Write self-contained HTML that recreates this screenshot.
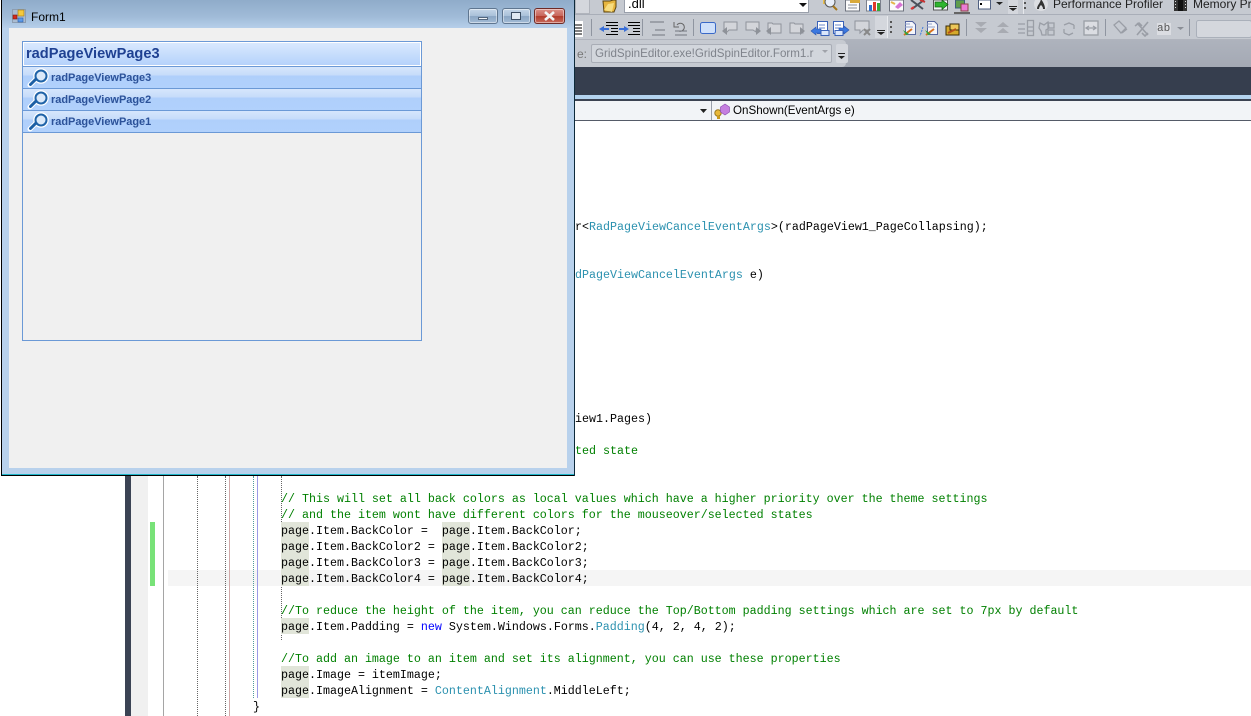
<!DOCTYPE html>
<html><head><meta charset="utf-8"><style>
html,body{margin:0;padding:0;background:#fff}
#p{position:relative;width:1251px;height:716px;overflow:hidden;background:#fff;font-family:"Liberation Sans",sans-serif}
.a{position:absolute}
.c{position:absolute;left:281px;height:16px;font:11.67px/16px "Liberation Mono",monospace;white-space:pre;color:#000;margin-top:1px}
.g{color:#008000}.t{color:#2b91af}.k{color:#0000ff}
.h{position:absolute;width:28px;height:16px;background:#e1e5d9}
.it{position:absolute;left:23px;width:398px;height:21px;background:linear-gradient(#d6e6fc 0,#c6dcfa 8px,#afcffb 9px,#b1d1fc 100%);border-bottom:1px solid #6b99d6}
.it span{position:absolute;left:28px;top:4px;font:bold 11px/15px "Liberation Sans",sans-serif;color:#2c5299;letter-spacing:-.03px}
.it svg{position:absolute;left:4px;top:0}
.b{position:absolute;top:8px;height:14px;border:1px solid #5f7690;border-radius:3px;background:linear-gradient(#c5d6e8,#a9c0d9 50%,#8ba6c4 52%,#a3bcd6);box-shadow:inset 0 0 0 1px rgba(255,255,255,.45)}
</style></head><body><div id="p">

<!-- toolbars -->
<div class="a" style="left:575px;top:0;width:676px;height:40px;background:#c6cad1"></div>
<div class="a" style="left:575px;top:14px;width:676px;height:1px;background:#a9aeb8"></div>
<div class="a" style="left:575px;top:39px;width:676px;height:1px;background:#b0b4bd"></div>
<div class="a" style="left:575px;top:40px;width:676px;height:27px;background:linear-gradient(#aeb3bd,#a4a9b4)"></div>
<div class="a" style="left:575px;top:40px;width:271px;height:27px;background:#c6cad1;border-radius:0 4px 4px 0"></div>
<div class="a" style="left:575px;top:67px;width:676px;height:28px;background:#363e4e"></div>
<div class="a" style="left:575px;top:95px;width:676px;height:4px;background:#b4d3ef"></div>
<div class="a" style="left:575px;top:99px;width:676px;height:2px;background:#3c4352"></div>
<div class="a" style="left:575px;top:101px;width:676px;height:19px;background:#f2f4f7"></div>
<div class="a" style="left:575px;top:120px;width:676px;height:1px;background:#555b68"></div>
<div class="a" style="left:711px;top:101px;width:1px;height:19px;background:#9aa0ab"></div>

<!-- first row items -->
<div class="a" style="left:575px;top:0;width:13px;height:13px;background:#d4d7dd;border:1px solid #b0b4bc;border-top:0"></div>
<div class="a" style="left:624px;top:0;width:180px;height:12px;background:#fff;border:1px solid #9aa0ab;border-top:0;font:13px/8px 'Liberation Sans',sans-serif;color:#000;padding-left:3px;overflow:hidden">.dll</div>
<div class="a" style="left:1053px;top:-3px;font:12px/14px 'Liberation Sans',sans-serif;color:#222;white-space:pre">Performance Profiler</div>
<div class="a" style="left:1193px;top:-3px;font:12px/14px 'Liberation Sans',sans-serif;color:#222;white-space:pre">Memory Pr</div>

<!-- third row combo -->
<div class="a" style="left:577px;top:46px;font:12px/16px 'Liberation Sans',sans-serif;color:#777">e:</div>
<div class="a" style="left:591px;top:44px;width:236px;height:17px;background:#d2d6dc;border:1px solid #a9adb6;border-radius:2px;font:11.6px/17px 'Liberation Sans',sans-serif;color:#7f838b;white-space:pre;overflow:hidden;padding-left:3px"><span>GridSpinEditor.exe!GridSpinEditor.Form1.r</span></div>
<div class="a" style="left:836px;top:44px;width:12px;height:19px;background:#d4d7dd;border-radius:2px"></div>

<!-- second combobox row text -->
<div class="a" style="left:733px;top:103px;font:11.6px/16px 'Liberation Sans',sans-serif;color:#000;white-space:pre">OnShown(EventArgs e)</div>

<!-- toolbar icons -->
<svg class="a" style="left:0;top:0" width="1251" height="125" viewBox="0 0 1251 125">
<!-- member icon -->
<g transform="translate(714,103)">
<circle cx="4" cy="10" r="3.200" fill="#e8b83a" stroke="#9a7a20"/><rect x="3" y="13" width="3" height="3" fill="#c99a1e"/>
<path d="M11 1l4.500 3v5l-4.500 3-4.500-3V4z" fill="#c57fe0" stroke="#8d4fb0" stroke-width=".7"/>
</g>
<path d="M700 109h7l-3.500 4z" fill="#222"/>
<path d="M799 3h8l-4 4z" fill="#111"/>
<!-- folder -->
<path d="M603 1h7l3-1h3v7l-2 5h-10z" fill="#e6b53f" stroke="#5c4510"/>
<path d="M604 10l4-6 6-1-2 9z" fill="#f7dd80"/>
<!-- row1 icons -->
<rect x="823" y="0" width="7" height="4" fill="#e9bf4c"/><circle cx="830" cy="2" r="5" fill="#e8eef8" stroke="#555"/><path d="M833 6l4 4" stroke="#a5761a" stroke-width="2"/>
<rect x="845.500" y="0" width="14" height="11" fill="#fbfbfb" stroke="#6f7480"/><path d="M848 5h9M848 8h9" stroke="#8a8f9a"/><path d="M850 0h10v3h-10z" fill="#d8a93a"/>
<rect x="866.500" y="0" width="14" height="11" fill="#fff" stroke="#7b808c"/><rect x="869" y="5" width="3" height="6" fill="#2f70d0"/><rect x="873" y="2" width="3" height="9" fill="#e03b2b"/><rect x="877" y="3" width="3" height="8" fill="#38a838"/>
<rect x="889.500" y="0" width="14" height="11" fill="#fbfbfb" stroke="#6f7480"/><path d="M895 7l5-5 3 3-5 4z" fill="#d775d3"/><path d="M891 2l4 2" stroke="#e3b64a" stroke-width="2"/>
<path d="M911 0l12 9M924 0l-12 9" stroke="#4b505a" stroke-width="2"/><path d="M911 9l3-2" stroke="#d33" stroke-width="2"/><path d="M920 0l5 2" stroke="#c33" stroke-width="2"/>
<rect x="933.500" y="0" width="14" height="10" fill="#f4f6f9" stroke="#555"/><path d="M935 2h7V0l6 4.500-6 5V7h-7z" fill="#2fb52f" stroke="#136013" stroke-width=".7"/>
<rect x="955.500" y="0" width="9" height="8" fill="#5f9d4c" stroke="#3e5c80"/><rect x="961" y="4" width="7" height="7" fill="#ec7bd6" stroke="#844"/><rect x="954" y="12" width="16" height="2" fill="#666"/>
<rect x="978.500" y="0" width="12" height="9" fill="#fff" stroke="#4f5f80"/><rect x="980" y="3" width="2" height="2" fill="#000"/>
<path d="M996 2h7l-3.500 3z" fill="#222"/>
<rect x="1008" y="0" width="10" height="14" fill="#d4d7dd"/>
<path d="M1009 6h8v1h-8zM1009 8h8l-4 3z" fill="#222"/>
<path d="M1023.500 0v14" stroke="#e6e8ec"/><path d="M1024 2h2v2h-2zM1024 7h2v2h-2z" fill="#555"/>
<circle cx="1041" cy="4" r="7" fill="#dcdee2"/><path d="M1037 9c0-4 3-5 4-10 2 3 4 6 4 10h-2c0-2-1-3-2-4-1 1-2 2-2 4z" fill="#333"/>
<rect x="1174" y="0" width="13" height="11" fill="#333"/><path d="M1175 1h1v1h-1zM1175 4h1v1h-1zM1175 7h1v1h-1zM1185 1h1v1h-1zM1185 4h1v1h-1zM1185 7h1v1h-1z" fill="#ddd"/><rect x="1178" y="0" width="5" height="11" fill="#111"/>

<!-- row2 -->
<rect x="575" y="21" width="8" height="16" fill="#fff"/><path d="M575 25h7M575 28h7M575 31h7M575 34h7" stroke="#000"/>
<path d="M591.500 19v17M642.500 19v17M693.500 19v17M966.500 19v17M1105.500 19v17M1189.500 19v17" stroke="#8f95a0"/>
<path d="M606 22.500h12M606 25.500h12M611 28.500h7M611 31.500h7M606 34.500h12M628 22.500h12M628 25.500h12M633 28.500h7M633 31.500h7M628 34.500h12" stroke="#000"/>
<path d="M599 29l5-3v2h5v2h-5v2zM629 29l-5-3v2h-5v2h5v2z" fill="#3a6fd8"/>
<path d="M650 22h14M655 30h10M652 35h13" stroke="#73777f"/>
<path d="M677 25a4 4 0 1 1 2 6" fill="none" stroke="#666"/><path d="M674 22v5h5" fill="none" stroke="#666"/><path d="M675 31h12M675 35h12" stroke="#73777f"/>
<rect x="700.500" y="22.500" width="15" height="11" rx="2" fill="#cfe0fa" stroke="#3a69c8"/>
<g fill="#d3d5da" stroke="#8f939b">
<path d="M724 22h13v8h-8l-2 2h-3z"/><path d="M746 22h13v8h-3v2l-3-2h-7z"/>
<path d="M768 23h4l1 1h8v9h-13z"/><path d="M790 23h4l1 1h8v9h-13z"/>
</g>
<g fill="#8e9299"><path d="M722 31l5-4v8zM761 31l-5-4v8zM766 31l5-4v8zM805 31l-5-4v8z"/></g>
<rect x="817.500" y="21.500" width="10" height="12" fill="#fff" stroke="#3a62b8"/><path d="M819 25h6M819 28h6" stroke="#6a8acc"/><path d="M811 31l5-4v2h5v4h-5v2z" fill="#3b78e0" stroke="#2a56b0" stroke-width=".6"/><rect x="821" y="30.500" width="8" height="5" fill="#dbe7fb" stroke="#3a62b8"/>
<rect x="833.500" y="21.500" width="10" height="12" fill="#fff" stroke="#3a62b8"/><path d="M835 25h6M835 28h6" stroke="#6a8acc"/><path d="M849 30l-5-4v2h-5v4h5v2z" fill="#3b78e0" stroke="#2a56b0" stroke-width=".6"/><rect x="835" y="30.500" width="8" height="5" fill="#dbe7fb" stroke="#3a62b8"/>
<path d="M855 21h14v9h-6l-3 3v-3h-5z" fill="#d3d5da" stroke="#8f939b"/><path d="M864 29l6 6M870 29l-6 6" stroke="#888" stroke-width="2"/>
<rect x="875" y="16" width="12" height="22" fill="#d4d7dd"/>
<path d="M877 30h8v1h-8zM877 32h8l-4 3z" fill="#222"/>
<path d="M887.500 16v22" stroke="#e8eaee"/><path d="M890 21h2v2h-2zM890 26h2v2h-2zM890 31h2v2h-2z" fill="#555"/>
<g stroke="#5566a0" fill="#f5f6fa"><path d="M905.500 21.500h7l3 3v10h-10z"/><path d="M927.500 21.500h7l3 3v10h-10z"/></g>
<path d="M905 27h8M905 24h5M927 27h8M927 24h5" stroke="#8ea0c8"/>
<path d="M904 35l8-6" stroke="#d8701c" stroke-width="2"/><path d="M903 30l3 5 3-1z" fill="#36a436"/>
<path d="M926 35l8-6" stroke="#d8701c" stroke-width="2"/><path d="M925 30l3 5 3-1z" fill="#36a436"/><path d="M923 27l-3 9" stroke="#3b78e0" stroke-dasharray="2 1"/>
<path d="M946 26h4l1 1h8v8h-13z" fill="#d5a92a" stroke="#3a2c08"/><path d="M950 24h9v6h-9z" fill="#ecc85a" stroke="#3a2c08"/><path d="M948 33l8-4" stroke="#b5501a" stroke-width="2"/>
<g fill="#a8abb2">
<path d="M975 22h12l-6 5zM975 28h12l-6 5z"/><path d="M997 33h12l-6-5zM997 27h12l-6-5z"/>
</g>
<g fill="none" stroke="#9a9ea6" stroke-width="1.300">
<rect x="1027.500" y="20.500" width="6" height="15"/><path d="M1027 27h6M1027 31h6"/><path d="M1018 24h7M1018 29h7M1018 33h7"/>
<path d="M1040 23l4 2 4-3 1 6-3 2v5h-4l-1-4-2-3zM1048 23h6v5h-6zM1048 30h6v5h-6z"/>
<path d="M1064 25l5-2 5 2M1074 25v4M1064 33l5 2 4-2M1064 33v-4"/>
<rect x="1084" y="21" width="14" height="14" fill="#dbdde2"/><path d="M1086 28h10M1089 26l-3 2 3 2M1093 26l3 2-3 2"/>
<path d="M1114 25l5-4 7 7-5 5zM1122 33l5-4"/><path d="M1137 35l11-13M1137 23l11 12M1135 26l4-3 3 3M1148 33l-3 3-3-3" stroke-width="1.600"/>
</g>
<rect x="1157" y="23" width="14" height="12" fill="#dbdde2"/>
<path d="M1177 27h7l-3.500 3z" fill="#8a8e96"/>
<rect x="1196.500" y="20.500" width="55" height="17" rx="2" fill="#d4d7dd" stroke="#aab0ba"/>
<path d="M838 53h7v1h-7zM838 56h7l-3.500 3z" fill="#222"/>
<path d="M822 50h6l-3 3z" fill="#a0a3aa"/>
</svg>
<div class="a" style="left:1157px;top:22px;font:11px/14px 'Liberation Mono',monospace;color:#555">ab</div>

<!-- code gutter -->
<div class="a" style="left:125px;top:476px;width:6px;height:240px;background:#3b4354"></div>
<div class="a" style="left:131px;top:476px;width:17px;height:240px;background:#f0f0f0"></div>
<div class="a" style="left:163px;top:476px;width:1px;height:240px;background:#a5a5a5"></div>
<div class="a" style="left:150px;top:522px;width:5px;height:64px;background:#78e278"></div>
<div class="a" style="left:168px;top:570px;width:1083px;height:16px;background:#f5f5f5"></div>
<div class="a" style="left:197px;top:476px;height:240px;border-left:1px dotted #666"></div>
<div class="a" style="left:225px;top:476px;height:240px;border-left:1px dotted #666"></div>
<div class="a" style="left:229px;top:476px;width:1px;height:240px;background:#d2a9a9"></div>
<div class="a" style="left:253px;top:476px;height:222px;border-left:1px dotted #4f9a9a"></div>
<div class="a" style="left:257px;top:476px;width:1px;height:222px;background:#9a9ae6"></div>
<div class="a" style="left:281px;top:476px;height:164px;border-left:1px dotted #666"></div>

<div class="h" style="left:281px;top:522px"></div><div class="h" style="left:442px;top:522px"></div>
<div class="h" style="left:281px;top:538px"></div><div class="h" style="left:442px;top:538px"></div>
<div class="h" style="left:281px;top:554px"></div><div class="h" style="left:442px;top:554px"></div>
<div class="h" style="left:281px;top:570px"></div><div class="h" style="left:442px;top:570px"></div>
<div class="h" style="left:281px;top:618px"></div>
<div class="h" style="left:281px;top:666px"></div>
<div class="h" style="left:281px;top:682px"></div>

<!-- code -->
<div class="c" style="left:575px;top:218px">r&lt;<span class="t">RadPageViewCancelEventArgs</span>&gt;(radPageView1_PageCollapsing);</div>
<div class="c" style="left:575px;top:266px"><span class="t">dPageViewCancelEventArgs</span> e)</div>
<div class="c" style="left:575px;top:410px">iew1.Pages)</div>
<div class="c g" style="left:575px;top:442px">ted state</div>
<div class="c g" style="top:490px">// This will set all back colors as local values which have a higher priority over the theme settings</div>
<div class="c g" style="top:506px">// and the item wont have different colors for the mouseover/selected states</div>
<div class="c" style="top:522px">page.Item.BackColor =  page.Item.BackColor;</div>
<div class="c" style="top:538px">page.Item.BackColor2 = page.Item.BackColor2;</div>
<div class="c" style="top:554px">page.Item.BackColor3 = page.Item.BackColor3;</div>
<div class="c" style="top:570px">page.Item.BackColor4 = page.Item.BackColor4;</div>
<div class="c g" style="top:602px">//To reduce the height of the item, you can reduce the Top/Bottom padding settings which are set to 7px by default</div>
<div class="c" style="top:618px">page.Item.Padding = <span class="k">new</span> System.Windows.Forms.<span class="t">Padding</span>(4, 2, 4, 2);</div>
<div class="c g" style="top:650px">//To add an image to an item and set its alignment, you can use these properties</div>
<div class="c" style="top:666px">page.Image = itemImage;</div>
<div class="c" style="top:682px">page.ImageAlignment = <span class="t">ContentAlignment</span>.MiddleLeft;</div>
<div class="c" style="left:253px;top:698px">}</div>

<!-- window -->
<div class="a" style="left:1px;top:0;width:574px;height:476px;background:#000"></div>
<div class="a" style="left:2px;top:0;width:572px;height:474px;background:#b8d1ec"></div>
<div class="a" style="left:2px;top:474px;width:572px;height:1px;background:#1fb6c9"></div>
<div class="a" style="left:574px;top:0;width:1px;height:476px;background:#0d2a3a"></div>
<div class="a" style="left:2px;top:0;width:572px;height:28px;background:linear-gradient(#8facca,#a0bbd8 60%,#b6cfea)"></div>
<div class="a" style="left:9px;top:28px;width:558px;height:440px;background:#f0f0f0"></div>

<svg class="a" style="left:12px;top:9px" width="15" height="15" viewBox="0 0 15 15">
<rect x="0.500" y="0.500" width="13" height="13" fill="#aabcd2" stroke="#8d9db0"/>
<rect x="1" y="6" width="4" height="4" fill="#d42a1c" stroke="#7a1b12" stroke-width=".6"/>
<rect x="6" y="1" width="6" height="6" fill="#f5c93c" stroke="#a27a10" stroke-width=".6"/>
<rect x="6" y="9" width="5" height="4" fill="#5e9ae6" stroke="#2a5ea8" stroke-width=".6"/>
</svg>
<div class="a" style="left:31px;top:9px;font:12px/16px 'Liberation Sans',sans-serif;color:#000">Form1</div>

<div class="b" style="left:468px;width:28px"><div class="a" style="left:9px;top:8px;width:10px;height:3px;background:#f0f3f7;border:1px solid #54677e;box-sizing:border-box"></div></div>
<div class="b" style="left:502px;width:27px"><div class="a" style="left:8px;top:3px;width:10px;height:8px;border:1px solid #3b4d63;box-sizing:border-box;background:#dfe8f2"></div></div>
<div class="b" style="left:534px;width:29px;border-color:#6e2a26;background:linear-gradient(#dc9088,#c6655a 50%,#b13a2a 52%,#c86a5c)">
<svg class="a" style="left:8px;top:2px" width="13" height="10"><path d="M2 1l9 8M11 1l-9 8" stroke="#f3f3f3" stroke-width="2.600"/></svg></div>

<!-- page view -->
<div class="a" style="left:22px;top:41px;width:398px;height:298px;border:1px solid #6b99d6;background:#f0f0f0"></div>
<div class="a" style="left:23px;top:42px;width:396px;height:22px;border:1px solid #fff;background:linear-gradient(#d9e9fe,#b5d2fb)"></div>
<div class="a" style="left:23px;top:66px;width:398px;height:1px;background:#6b99d6"></div>
<div class="a" style="left:26px;top:45px;font:bold 14.6px/18px 'Liberation Sans',sans-serif;color:#1f4192;white-space:pre">radPageViewPage3</div>

<div class="it" style="top:67px"><svg width="24" height="21" viewBox="0 0 24 21"><circle cx="14" cy="9" r="6" fill="#e6f0fb" stroke="#fff" stroke-width="3.500"/><path d="M3 18l5-5" stroke="#fff" stroke-width="5" stroke-linecap="round"/><circle cx="14" cy="9" r="5.500" fill="#dbe9f9" stroke="#1f63a8" stroke-width="2"/><path d="M3.500 17.500l5-5" stroke="#1c5fa5" stroke-width="3" stroke-linecap="round"/></svg><span>radPageViewPage3</span></div>
<div class="it" style="top:89px"><svg width="24" height="21" viewBox="0 0 24 21"><circle cx="14" cy="9" r="6" fill="#e6f0fb" stroke="#fff" stroke-width="3.500"/><path d="M3 18l5-5" stroke="#fff" stroke-width="5" stroke-linecap="round"/><circle cx="14" cy="9" r="5.500" fill="#dbe9f9" stroke="#1f63a8" stroke-width="2"/><path d="M3.500 17.500l5-5" stroke="#1c5fa5" stroke-width="3" stroke-linecap="round"/></svg><span>radPageViewPage2</span></div>
<div class="it" style="top:111px"><svg width="24" height="21" viewBox="0 0 24 21"><circle cx="14" cy="9" r="6" fill="#e6f0fb" stroke="#fff" stroke-width="3.500"/><path d="M3 18l5-5" stroke="#fff" stroke-width="5" stroke-linecap="round"/><circle cx="14" cy="9" r="5.500" fill="#dbe9f9" stroke="#1f63a8" stroke-width="2"/><path d="M3.500 17.500l5-5" stroke="#1c5fa5" stroke-width="3" stroke-linecap="round"/></svg><span>radPageViewPage1</span></div>

</div></body></html>
